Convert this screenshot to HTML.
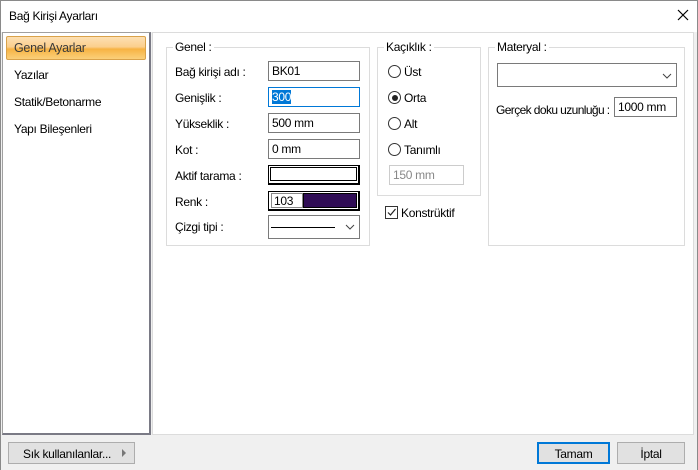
<!DOCTYPE html>
<html><head><meta charset="utf-8"><style>
*{box-sizing:border-box;margin:0;padding:0}
body{width:698px;height:470px;background:#f0f0f0;font-family:"Liberation Sans",sans-serif;font-size:12px;color:#000;position:relative;overflow:hidden;letter-spacing:-0.3px}
.a{position:absolute}
.win{left:0;top:0;width:698px;height:470px;border:1px solid #8a8a8a;border-bottom:none}
.tb{left:1px;top:1px;width:696px;height:31px;background:#fff}
.inp{position:absolute;background:#fff;border:1px solid #7a7a7a;height:20px;padding:2px 0 0 3px;font-size:12px}
.grp{position:absolute;border:1px solid #dcdcdc}
.gl{position:absolute;background:#fff;padding:0 2px;top:-8px;left:6px}
.lb{position:absolute}
.rad{position:absolute;width:13px;height:13px;border:1px solid #333;border-radius:50%;background:#fff}
.btn{position:absolute;background:#e1e1e1;border:1px solid #adadad;text-align:center;padding-top:4px}
</style></head><body>
<div class="a win"></div>
<div class="a tb"></div>
<div class="a" style="left:9px;top:9px;font-size:12px">Bağ Kirişi Ayarları</div>
<svg class="a" style="left:677px;top:9px" width="12" height="12"><path d="M1 1L11 11M11 1L1 11" stroke="#000" stroke-width="1.2"/></svg>

<div class="a" style="left:2px;top:32px;width:149px;height:403px;background:#fff;border:1px solid #a0a0a0;border-right:2px solid #7a7a85;border-bottom:2px solid #7a7a85"></div>
<div class="a" style="left:6px;top:36px;width:140px;height:24px;border:1px solid #d9a24a;border-radius:2px;background:linear-gradient(#fde0b3 0%,#fbcf8d 45%,#f7b343 55%,#fbd07a 100%)"></div>
<div class="a" style="left:14px;top:41px;color:#3a3a3a;font-size:12.5px">Genel Ayarlar</div>
<div class="a" style="left:14px;top:68px">Yazılar</div>
<div class="a" style="left:14px;top:95px">Statik/Betonarme</div>
<div class="a" style="left:14px;top:122px">Yapı Bileşenleri</div>

<div class="a" style="left:152px;top:32px;width:542px;height:403px;background:#fff;border:1px solid #dcdcdc"></div>

<div class="grp" style="left:166px;top:47px;width:204px;height:199px"><span class="gl" style="left:6px">Genel :</span></div>
<div class="lb" style="left:175px;top:65px">Bağ kirişi adı :</div>
<div class="inp" style="left:268px;top:61px;width:92px">BK01</div>
<div class="lb" style="left:175px;top:91px">Genişlik :</div>
<div class="inp" style="left:268px;top:87px;width:92px;border-color:#0078d7"><span style="background:#0078d7;color:#fff">300</span></div>
<div class="lb" style="left:175px;top:117px">Yükseklik :</div>
<div class="inp" style="left:268px;top:113px;width:92px">500 mm</div>
<div class="lb" style="left:175px;top:143px">Kot :</div>
<div class="inp" style="left:268px;top:139px;width:92px">0 mm</div>
<div class="lb" style="left:175px;top:169px">Aktif tarama :</div>
<div class="a" style="left:268px;top:165px;width:92px;height:20px;border:1px solid #000;border-right:2px solid #000;border-bottom:2px solid #000;background:#fff"><div style="margin:1px;height:14px;border:1px solid #000"></div></div>
<div class="lb" style="left:175px;top:195px">Renk :</div>
<div class="a" style="left:268px;top:191px;width:92px;height:20px;border:1px solid #000;border-right:2px solid #000;border-bottom:2px solid #000;background:#fff"></div>
<div class="a" style="left:271px;top:193px;width:32px;height:15px;border:1px solid #888;background:#fff;padding-left:2px;font-size:12px;line-height:14px">103</div>
<div class="a" style="left:303px;top:193px;width:54px;height:15px;background:#2f0c55;border:1px solid #000"></div>
<div class="lb" style="left:175px;top:220px">Çizgi tipi :</div>
<div class="a" style="left:268px;top:215px;width:92px;height:24px;border:1px solid #7a7a7a;background:#fff"></div>
<div class="a" style="left:271px;top:227px;width:64px;height:1px;background:#000"></div>
<svg class="a" style="left:345px;top:224px" width="10" height="6"><path d="M1 1L5 5L9 1" stroke="#444" fill="none"/></svg>

<div class="grp" style="left:377px;top:47px;width:104px;height:149px"><span class="gl" style="left:6px">Kaçıklık :</span></div>
<div class="rad" style="left:388px;top:65px"></div><div class="lb" style="left:404px;top:65px">Üst</div>
<div class="rad" style="left:388px;top:91px"></div><div class="a" style="left:392px;top:95px;width:6px;height:6px;border-radius:50%;background:#222"></div><div class="lb" style="left:404px;top:91px">Orta</div>
<div class="rad" style="left:388px;top:117px"></div><div class="lb" style="left:404px;top:117px">Alt</div>
<div class="rad" style="left:388px;top:143px"></div><div class="lb" style="left:404px;top:143px">Tanımlı</div>
<div class="inp" style="left:389px;top:165px;width:75px;border-color:#ccc;color:#888">150 mm</div>
<div class="a" style="left:385px;top:206px;width:13px;height:13px;border:1px solid #333;background:#fff"></div>
<svg class="a" style="left:386px;top:207px" width="11" height="11"><path d="M2 5.5L4.5 8L9.5 2" stroke="#222" fill="none" stroke-width="1.2"/></svg>
<div class="lb" style="left:401px;top:206px">Konstrüktif</div>

<div class="grp" style="left:488px;top:47px;width:197px;height:199px"><span class="gl" style="left:6px">Materyal :</span></div>
<div class="a" style="left:497px;top:63px;width:180px;height:24px;border:1px solid #7a7a7a;background:#fff"></div>
<svg class="a" style="left:662px;top:73px" width="10" height="6"><path d="M1 1L5 5L9 1" stroke="#444" fill="none"/></svg>
<div class="lb" style="left:496px;top:103px;letter-spacing:-0.6px;white-space:nowrap">Gerçek doku uzunluğu :</div>
<div class="inp" style="left:614px;top:97px;width:63px">1000 mm</div>

<div class="btn" style="left:8px;top:442px;width:127px;height:22px;text-align:left;padding-left:14px">Sık kullanılanlar...</div>
<svg class="a" style="left:122px;top:449px" width="5" height="8"><path d="M0 0L4 4L0 8Z" fill="#777"/></svg>
<div class="btn" style="left:537px;top:442px;width:73px;height:22px;border:2px solid #0078d7;padding-top:3px">Tamam</div>
<div class="btn" style="left:617px;top:442px;width:68px;height:22px">İptal</div>
</body></html>
